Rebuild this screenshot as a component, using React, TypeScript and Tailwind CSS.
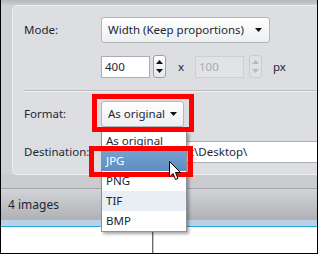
import React from "react";

function Tri({ up, color = "#111" }: { up?: boolean; color?: string }) {
  return (
    <svg width="7" height="4" viewBox="0 0 7 4" className="block">
      {up ? (
        <polygon points="0,4 7,4 3.5,0" fill={color} />
      ) : (
        <polygon points="0,0 7,0 3.5,4" fill={color} />
      )}
    </svg>
  );
}

function Spinner({ disabled }: { disabled?: boolean }) {
  return (
    <div
      className={
        "w-[13px] h-[23px] rounded-[3px] border flex flex-col items-center justify-between py-[4px] " +
        (disabled
          ? "border-[#c9cbce] bg-[#dfe1e3]"
          : "border-[#9ea2a7] bg-gradient-to-b from-[#ffffff] to-[#e6e7e9]")
      }
    >
      <Tri up color={disabled ? "#b8babd" : "#111"} />
      <Tri color={disabled ? "#b8babd" : "#111"} />
    </div>
  );
}

function Cursor() {
  return (
    <svg width="13" height="20" viewBox="0 0 13 20" className="absolute left-[168px] top-[161px]">
      <path
        d="M0.5 0.5 L0.5 16 L4 12.5 L6.5 18.5 L9 17.5 L6.5 11.5 L11.5 11.5 Z"
        fill="#ffffff"
        stroke="#000000"
        strokeWidth="1"
        strokeLinejoin="miter"
      />
    </svg>
  );
}

export default function App() {
  return (
    <div className="relative w-[318px] h-[254px] overflow-hidden bg-[#cfd1d4] border-x border-b border-black font-['Noto_Sans',sans-serif] text-[11.5px] leading-none text-[#1b2636] flex flex-col">
      <div className="h-[5px] bg-gradient-to-b from-[#b4b6b9] to-[#cbcdd0]" />
      <div className="pl-[11px]">
        <div className="h-[170px] rounded-l-[5px] bg-[#dcdee1] border border-r-0 border-[#eceef0] pl-[11px] pt-[11px] flex flex-col">
          <div className="flex items-center h-[26px]">
            <div className="w-[77px]">Mode:</div>
            <div className="w-[169px] h-[26px] rounded-[3px] border border-[#b3b6ba] bg-gradient-to-b from-[#ffffff] to-[#eeeff1] flex items-center justify-between pl-[6px] pr-[7px]">
              <span>Width (Keep proportions)</span>
              <Tri />
            </div>
          </div>
          <div className="flex items-center h-[23px] mt-[12px]">
            <div className="w-[77px]" />
            <div className="w-[49px] h-[22px] bg-white border border-[#abadb3] flex items-center pl-[3px]">400</div>
            <div className="ml-[3px]">
              <Spinner />
            </div>
            <div className="ml-[12px] w-[17px]">x</div>
            <div className="w-[49px] h-[22px] bg-[#e2e3e5] border border-[#cdcfd2] flex items-center pl-[3px] text-[#a9abae]">100</div>
            <div className="ml-[5px]">
              <Spinner disabled />
            </div>
            <div className="ml-[11px]">px</div>
          </div>
          <div className="mt-[12px] h-[1px] bg-[#b9bbbe] border-b border-[#eef0f1] box-content" />
          <div className="flex items-center h-[26px] mt-[9px]">
            <div className="w-[77px]">Format:</div>
            <div className="w-[83px] h-[26px] rounded-[3px] border border-[#b3b6ba] bg-gradient-to-b from-[#ffffff] to-[#eeeff1] flex items-center justify-between pl-[6px] pr-[6px]">
              <span>As original</span>
              <Tri />
            </div>
          </div>
          <div className="flex items-center h-[22px] mt-[14px]">
            <div className="w-[77px]">Destination:</div>
            <div className="flex-1 h-[22px] bg-white border border-[#abadb3] border-r-0 flex items-center pl-[3px]">
              <span>C:\Users\Default\Desktop\</span>
            </div>
          </div>
        </div>
      </div>
      <div className="h-[13px] bg-[#caccd0] border-b border-[#a3a5a9] box-content" />
      <div className="h-[31px] bg-gradient-to-b from-[#d3d4d7] to-[#afb1b4] flex items-center pl-[7px] text-[12px]">
        4 images
      </div>
      <div className="h-[6px] bg-[#b9d2ea]" />
      <div className="h-[1px] bg-[#2fa8cf]" />
      <div className="flex-1 bg-white flex">
        <div className="ml-[151px] w-[1px] bg-[#666a6e]" />
        <div className="w-[1px] bg-[#c5c7ca]" />
      </div>

      {/* dropdown list */}
      <div className="absolute left-[100px] top-[131px] w-[86px] h-[101px] bg-white border border-[#8e9296] shadow-[2px_2px_3px_rgba(0,0,0,0.35)] flex flex-col">
        <div className="h-[18px] flex items-center pl-[4px]">As original</div>
        <div className="h-[21px] flex items-center pl-[4px] bg-gradient-to-b from-[#74a3d2] to-[#5d8ec2] text-white">JPG</div>
        <div className="h-[20px] flex items-center pl-[4px]">PNG</div>
        <div className="h-[20px] flex items-center pl-[4px] bg-[#e8eef3]">TIF</div>
        <div className="h-[20px] flex items-center pl-[4px]">BMP</div>
      </div>

      {/* red annotation boxes */}
      <div className="absolute left-[91px] top-[94px] w-[102px] h-[38px] border-[5px] border-[#ff0000]" />
      <div className="absolute left-[88px] top-[146px] w-[104px] h-[31px] border-[5px] border-[#ff0000]" />

      <Cursor />
    </div>
  );
}
